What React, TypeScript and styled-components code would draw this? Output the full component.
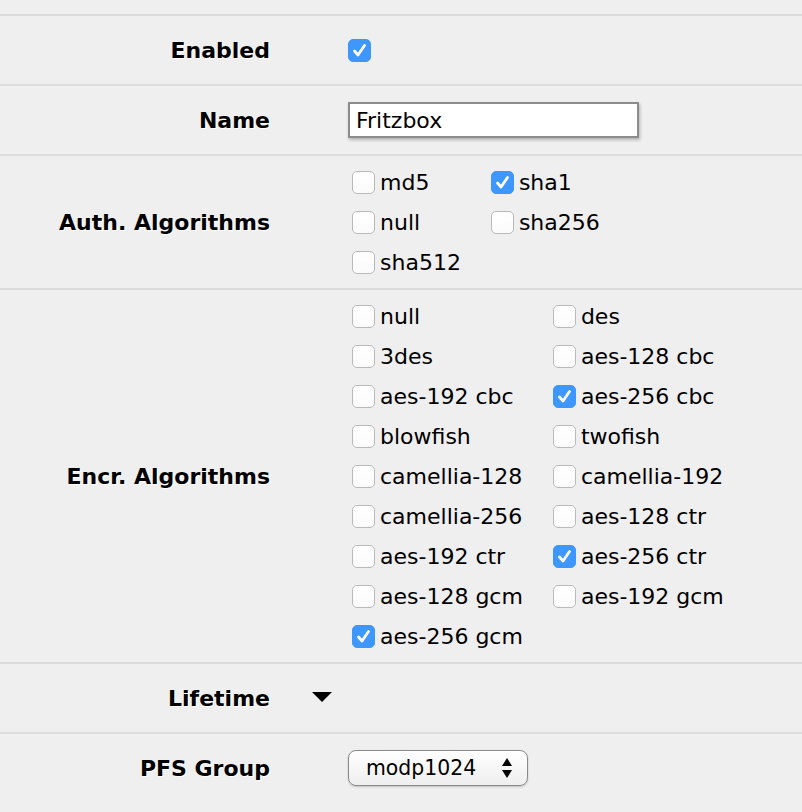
import React from "react";
import styled, { createGlobalStyle } from "styled-components";

const Global = createGlobalStyle`
  html, body { margin: 0; padding: 0; background: #efefef; }
  body { font-family: "DejaVu Sans", Verdana, sans-serif; color: #000; }
`;

const Page = styled.div`
  padding-top: 14px;
  background: #efefef;
  min-height: 798px;
`;

const Row = styled.div`
  display: grid;
  grid-template-columns: 270px 78px 1fr;
  align-items: center;
  min-height: 70px;
  padding: 6px 0;
  box-sizing: border-box;
  border-top: 2px solid #dcdcdc;
`;

const Label = styled.div`
  text-align: right;
  font-weight: bold;
  font-size: 22px;
  text-shadow: 1px 1px 0 #fff;
  white-space: nowrap;
`;

const Aside = styled.div`
  display: flex;
  align-items: center;
  padding-left: 42px;
`;

const Value = styled.div`
  display: flex;
  align-items: center;
`;

const Box = styled.span<{ $checked?: boolean }>`
  display: inline-flex;
  align-items: center;
  justify-content: center;
  width: 23px;
  height: 23px;
  box-sizing: border-box;
  border-radius: 5px;
  flex: none;
  background: ${(p) => (p.$checked ? "#3d97fc" : "linear-gradient(#fff, #fbfbfb)")};
  border: 1px solid ${(p) => (p.$checked ? "#3d97fc" : "#b9b9b9")};
`;

const Check = ({ checked }: { checked?: boolean }) => (
  <Box $checked={checked}>
    {checked && (
      <svg width="17" height="17" viewBox="0 0 17 17">
        <path d="M3.5 9 L7 13 L13.5 3.5" fill="none" stroke="#fff" strokeWidth="2.8" strokeLinecap="round" strokeLinejoin="round" />
      </svg>
    )}
  </Box>
);

const Grid = styled.div`
  display: grid;
  grid-template-columns: auto auto;
  column-gap: 30px;
  justify-content: start;
  padding-left: 4px;
`;

const Item = styled.label`
  display: flex;
  align-items: center;
  height: 40px;
  gap: 5px;
  font-size: 22px;
  white-space: nowrap;
`;

const TextInput = styled.div`
  width: 291px;
  height: 36px;
  box-sizing: border-box;
  background: #fff;
  border: 2px solid #8c8c8c;
  box-shadow: 1px 2px 3px rgba(0, 0, 0, 0.25);
  font-size: 22px;
  display: flex;
  align-items: center;
  padding-left: 6px;
`;

const Select = styled.div`
  width: 180px;
  height: 36px;
  box-sizing: border-box;
  border: 1.5px solid #8a8a8a;
  border-radius: 8px;
  background: linear-gradient(#fff, #eeeeee);
  box-shadow: 0 1px 2px rgba(0, 0, 0, 0.2);
  font-size: 20.4px;
  display: flex;
  align-items: center;
  justify-content: space-between;
  padding: 0 14px 0 17px;
`;

const Triangle = styled.span`
  width: 0;
  height: 0;
  border-left: 10px solid transparent;
  border-right: 10px solid transparent;
  border-top: 10px solid #000;
  margin-top: -2px;
`;

const auth = [
  ["md5", false],
  ["sha1", true],
  ["null", false],
  ["sha256", false],
  ["sha512", false],
] as const;

const encr = [
  ["null", false],
  ["des", false],
  ["3des", false],
  ["aes-128 cbc", false],
  ["aes-192 cbc", false],
  ["aes-256 cbc", true],
  ["blowfish", false],
  ["twofish", false],
  ["camellia-128", false],
  ["camellia-192", false],
  ["camellia-256", false],
  ["aes-128 ctr", false],
  ["aes-192 ctr", false],
  ["aes-256 ctr", true],
  ["aes-128 gcm", false],
  ["aes-192 gcm", false],
  ["aes-256 gcm", true],
] as const;

export default function App() {
  return (
    <Page>
      <Global />
      <Row>
        <Label>Enabled</Label>
        <Aside />
        <Value>
          <Check checked />
        </Value>
      </Row>
      <Row>
        <Label>Name</Label>
        <Aside />
        <Value>
          <TextInput>Fritzbox</TextInput>
        </Value>
      </Row>
      <Row>
        <Label>Auth. Algorithms</Label>
        <Aside />
        <Grid>
          {auth.map(([n, c]) => (
            <Item key={n}>
              <Check checked={c} />
              {n}
            </Item>
          ))}
        </Grid>
      </Row>
      <Row>
        <Label>Encr. Algorithms</Label>
        <Aside />
        <Grid>
          {encr.map(([n, c]) => (
            <Item key={n}>
              <Check checked={c} />
              {n}
            </Item>
          ))}
        </Grid>
      </Row>
      <Row>
        <Label>Lifetime</Label>
        <Aside>
          <Triangle />
        </Aside>
        <Value />
      </Row>
      <Row>
        <Label>PFS Group</Label>
        <Aside />
        <Value>
          <Select>
            <span>modp1024</span>
            <svg width="12" height="22" viewBox="0 0 12 22">
              <path d="M6 1 L11 9 L1 9 Z M1 13 L11 13 L6 21 Z" fill="#000" />
            </svg>
          </Select>
        </Value>
      </Row>
    </Page>
  );
}
